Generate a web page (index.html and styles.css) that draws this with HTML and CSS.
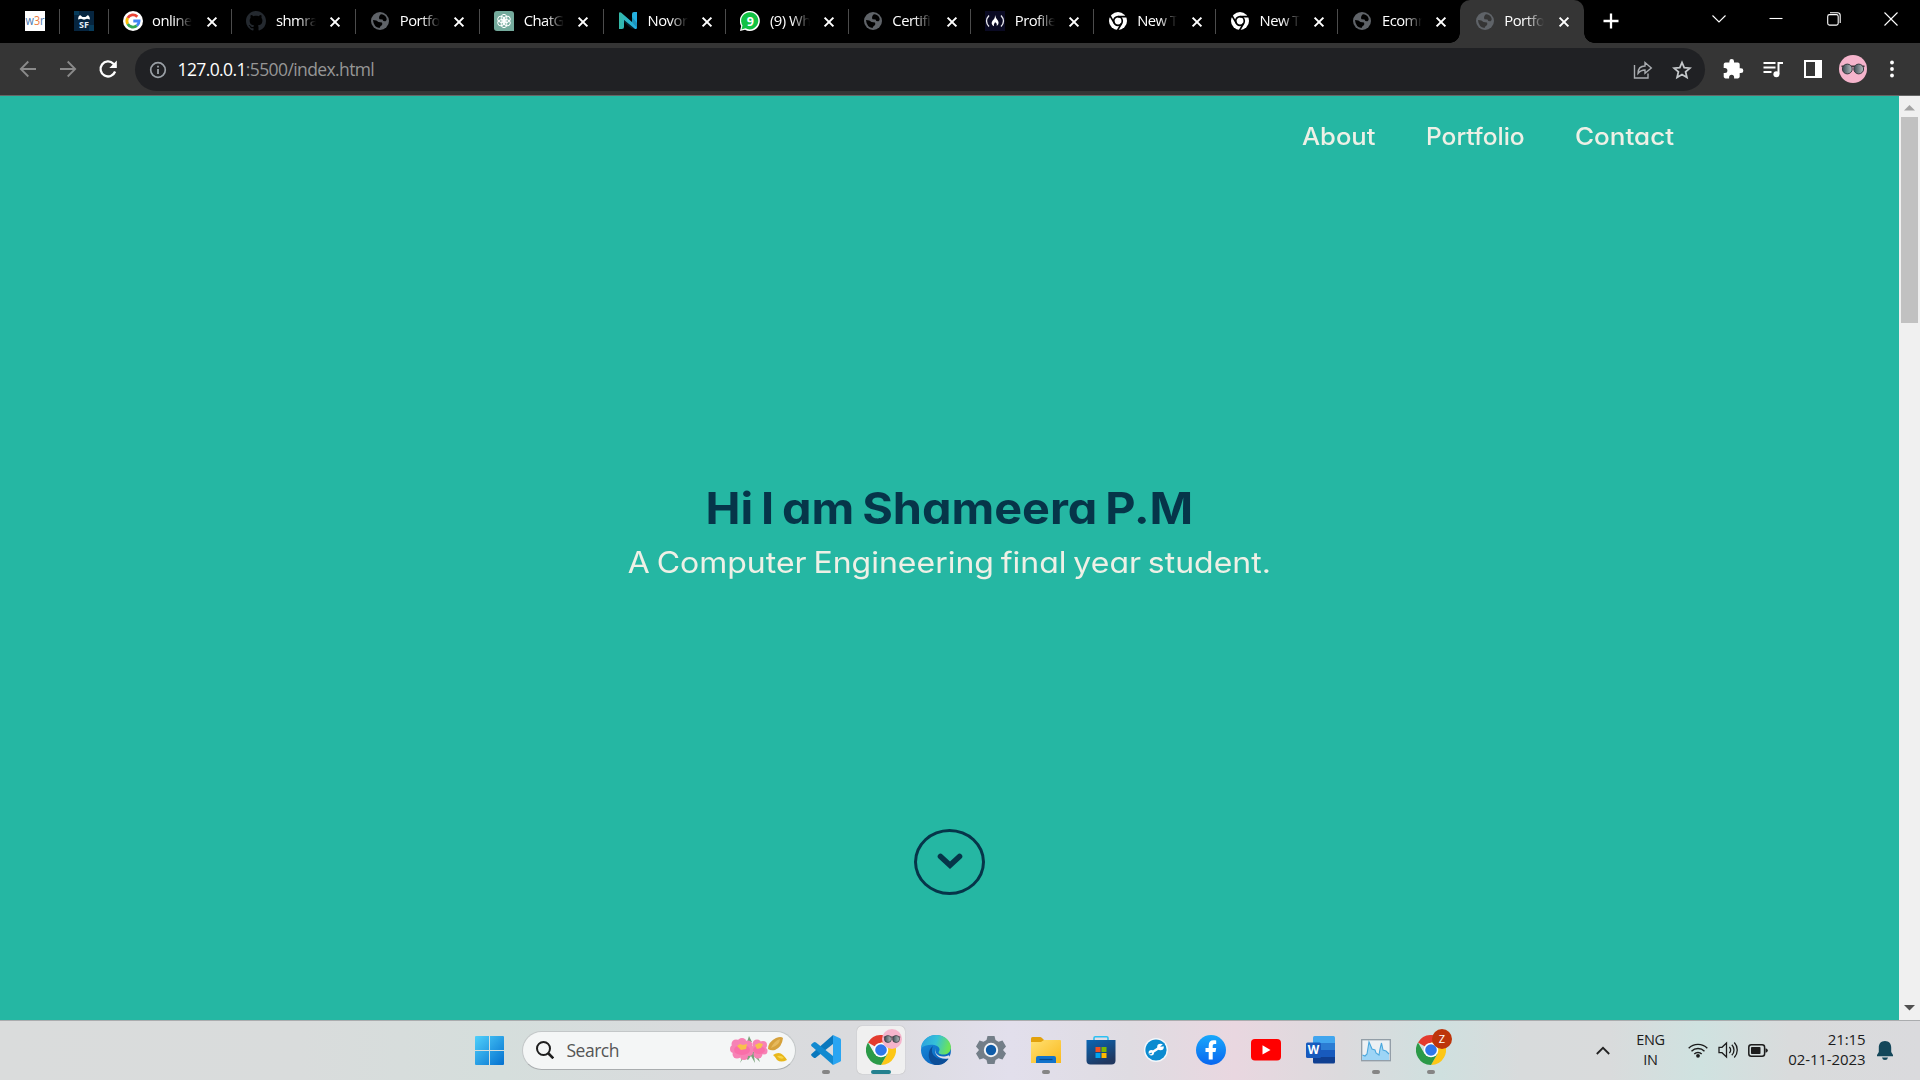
FILE: index.html
```html
<!DOCTYPE html>
<html lang="en">
<head>
<meta charset="utf-8">
<title>Portfolio</title>
<link rel="stylesheet" href="styles.css">
</head>
<body>
<svg class="defs" width="0" height="0">
  <defs>
    <linearGradient id="winG" x1="0" y1="0" x2="1" y2="1"><stop offset="0" stop-color="#4fd0fb"/><stop offset="1" stop-color="#0470cf"/></linearGradient>
    <linearGradient id="nG" x1="0" x2="1"><stop offset="0" stop-color="#35b9a5"/><stop offset="1" stop-color="#22aee8"/></linearGradient>
    <linearGradient id="edgeA" x1="0" y1="0" x2="1" y2="0.2"><stop offset="0" stop-color="#2a9de0"/><stop offset="0.55" stop-color="#35c1d8"/><stop offset="1" stop-color="#6be35a"/></linearGradient>
    <linearGradient id="edgeB" x1="0" y1="0" x2="0.6" y2="1"><stop offset="0" stop-color="#1a94e0"/><stop offset="1" stop-color="#0b62bd"/></linearGradient>
    <linearGradient id="foldG" x1="0" y1="0" x2="1" y2="1"><stop offset="0" stop-color="#ffe072"/><stop offset="1" stop-color="#fab91c"/></linearGradient>
    <linearGradient id="storeG" x1="0" y1="0" x2="0.5" y2="1"><stop offset="0" stop-color="#0a66b4"/><stop offset="1" stop-color="#20375f"/></linearGradient>
    <linearGradient id="fbG" x1="0" y1="0" x2="0" y2="1"><stop offset="0" stop-color="#19a8fb"/><stop offset="1" stop-color="#0866f0"/></linearGradient>
    <linearGradient id="lensG" x1="0" y1="0" x2="1" y2="0"><stop offset="0" stop-color="#3b4a52"/><stop offset="1" stop-color="#b5bcc0"/></linearGradient>
    <symbol id="close" viewBox="0 0 12 12"><path d="M1.600 1.600 10.400 10.400M10.400 1.600 1.600 10.400" stroke="#fff" stroke-width="2" fill="none"/></symbol>
    <symbol id="globe" viewBox="0 0 20 20"><circle cx="10" cy="10" r="9" fill="#5f6368"/><path d="M10.500 3.400Q14.500 3 16.500 7 17.300 9.800 15.500 10.300 13 10.600 12.500 8.500L9.500 8.200Q8.200 6 10.500 3.400zM3 9Q7 9 8.500 11L12 11.500Q13 14 10.500 15.300L9.500 17Q3.500 16 3 9z" fill="var(--land,#000)"/></symbol>
    <symbol id="chromeMono" viewBox="0 0 20 20"><circle cx="10" cy="10" r="9" fill="#fff"/><circle cx="10" cy="10" r="4.300" fill="none" stroke="#000" stroke-width="1.700"/><path d="M10 5.700h8.300M6.300 12.200 2.100 4.900M13.700 12.200 9.500 19.400" stroke="#000" stroke-width="1.700"/></symbol>
    <symbol id="chrome" viewBox="0 0 30 30"><path d="M15 15 2 7.500A15 15 0 0 1 28 7.500H15z" fill="#e33b2e"/><path d="M15 15 28 7.500A15 15 0 0 1 15 30l6.500-11.200z" fill="#fdc716"/><path d="M15 15 8.500 18.800 2 7.500A15 15 0 0 0 15 30l6.500-11.200z" fill="#2b9a48"/><path d="M15 7.500H28L21 15z" fill="#fdc716"/><circle cx="15" cy="15" r="7.300" fill="#fff"/><circle cx="15" cy="15" r="5.800" fill="#2f78ea"/></symbol>
    <symbol id="shades" viewBox="0 0 28 28"><circle cx="14" cy="14" r="14" fill="#f5b4cc"/><path d="M2.500 11.300h23" stroke="#42373c" stroke-width="1.600"/><circle cx="8.300" cy="14" r="4.900" fill="url(#lensG)" stroke="#3a3a40" stroke-width="1"/><circle cx="19.700" cy="14" r="4.900" fill="url(#lensG)" stroke="#3a3a40" stroke-width="1"/></symbol>
  </defs>
</svg>

<div class="screen">
  <header class="tabstrip">
    <div class="tab pinned first"><svg class="fav" viewBox="0 0 20 20"><rect width="20" height="20" fill="#fff"/><text x="0.500" y="14" font-size="12" textLength="19" lengthAdjust="spacingAndGlyphs" fill="#4a78b0">w<tspan fill="#ee7d42">3</tspan>r</text></svg></div>
    <div class="tab pinned"><svg class="fav" viewBox="0 0 20 20"><rect width="20" height="20" fill="#06253f"/><path d="M0 0h5v4H0zM15 14h5v6h-5z" fill="#073b5a"/><path d="M4 8.500Q4 5 6 4l2.500 2h3L14 4q2 1.500 2 4.500l-3-.8-3 1-3-1z" fill="#fff"/><text x="10" y="16.500" font-size="9" font-weight="700" text-anchor="middle" fill="#e2eef7">SF</text></svg></div>
    <div class="tab wide"><svg class="fav" viewBox="0 0 20 20"><circle cx="10" cy="10" r="10" fill="#fff"/><g fill="none" stroke-width="2.800"><path d="M4.700 7A6.100 6.100 0 0 1 14.300 5.700" stroke="#ea4335"/><path d="M4.700 13A6.100 6.100 0 0 1 4.700 7" stroke="#fbbc05"/><path d="M4.700 13A6.100 6.100 0 0 0 13.900 14.700" stroke="#34a853"/><path d="M13.900 14.700A6.100 6.100 0 0 0 16.100 10H10.300" stroke="#4285f4"/></g></svg><span class="label">online</span><svg class="x"><use href="#close"/></svg></div>
    <div class="tab wide"><svg class="fav" viewBox="0 0 16 16"><path fill="#24292f" d="M8 0C3.580 0 0 3.580 0 8c0 3.540 2.290 6.530 5.470 7.590.4.070.55-.17.55-.38 0-.19-.01-.82-.01-1.490-2.010.37-2.530-.49-2.690-.94-.09-.23-.48-.94-.82-1.130-.28-.15-.68-.52-.01-.53.63-.01 1.080.58 1.230.82.72 1.210 1.870.87 2.330.66.070-.52.28-.87.51-1.070-1.780-.2-3.640-.89-3.640-3.950 0-.87.31-1.590.82-2.150-.08-.2-.36-1.020.08-2.120 0 0 .67-.21 2.200.82.64-.18 1.320-.27 2-.27s1.360.09 2 .27c1.530-1.040 2.200-.82 2.200-.82.44 1.100.16 1.920.08 2.120.51.56.82 1.270.82 2.150 0 3.070-1.870 3.750-3.650 3.950.29.25.54.73.54 1.480 0 1.070-.01 1.930-.01 2.200 0 .21.15.46.55.38A8.010 8.010 0 0 0 16 8c0-4.420-3.580-8-8-8z"/></svg><span class="label">shmra</span><svg class="x"><use href="#close"/></svg></div>
    <div class="tab wide"><svg class="fav"><use href="#globe"/></svg><span class="label">Portfo</span><svg class="x"><use href="#close"/></svg></div>
    <div class="tab wide"><svg class="fav" viewBox="0 0 20 20"><path d="M3 0h14q3 0 3 3v17H3q-3 0-3-3V3q0-3 3-3z" fill="#74aa9c"/><g fill="none" stroke="#fff" stroke-width="1"><ellipse id="petal" cx="10" cy="7" rx="2.900" ry="3.700"/><use href="#petal" transform="rotate(60 10 10)"/><use href="#petal" transform="rotate(120 10 10)"/><use href="#petal" transform="rotate(180 10 10)"/><use href="#petal" transform="rotate(240 10 10)"/><use href="#petal" transform="rotate(300 10 10)"/></g></svg><span class="label">ChatG</span><svg class="x"><use href="#close"/></svg></div>
    <div class="tab"><svg class="fav" viewBox="0 0 20 20"><path d="M1 2.500Q1 .5 3 1.500L14 11V3Q14 1 16 1h3v15.500q0 2-2 1.500L6 9v7q0 2-2 2H1z" fill="url(#nG)"/><path d="M6 9l11 9q-4-.5-6-2.500L6 11zM14 11V6l5 6v5z" fill="#0b5f7c" opacity=".35"/></svg><span class="label">Novo<i>r</i></span><svg class="x"><use href="#close"/></svg></div>
    <div class="tab"><svg class="fav" viewBox="0 0 20 20"><path d="M0 20 1.200 15A10 10 0 1 1 5 18.700z" fill="#fff"/><path d="M1.500 18.500 2.500 14.500A8.600 8.600 0 1 1 5.500 17.300z" fill="#11c244"/><text x="6.700" y="14.500" font-size="12.500" font-weight="700" fill="#fff">9</text></svg><span class="label">(9) Wh</span><svg class="x"><use href="#close"/></svg></div>
    <div class="tab"><svg class="fav"><use href="#globe"/></svg><span class="label">Certifi</span><svg class="x"><use href="#close"/></svg></div>
    <div class="tab"><svg class="fav" viewBox="0 0 20 20"><rect width="20" height="20" fill="#0a0a23"/><path d="M4 4.500q-5 5.500 0 11M16 4.500q5 5.500 0 11" fill="none" stroke="#e8e8ee" stroke-width="1.300"/><path d="M10 4q.5 2.500 2.500 5c2 2.800.8 5-.8 6 .5-2-.3-3-1.700-3.700-.5 1.500-1.700 2-.9 3.900C6.200 14 6 11 8.200 9 10 7.300 10 5.500 10 4z" fill="#fff"/></svg><span class="label">Profile</span><svg class="x"><use href="#close"/></svg></div>
    <div class="tab"><svg class="fav"><use href="#chromeMono"/></svg><span class="label">New T</span><svg class="x"><use href="#close"/></svg></div>
    <div class="tab"><svg class="fav"><use href="#chromeMono"/></svg><span class="label">New T</span><svg class="x"><use href="#close"/></svg></div>
    <div class="tab last"><svg class="fav"><use href="#globe"/></svg><span class="label">Ecom<i>m</i></span><svg class="x"><use href="#close"/></svg></div>
    <div class="tab active"><svg class="fav"><use href="#globe"/></svg><span class="label">Portfo</span><svg class="x"><use href="#close"/></svg></div>
    <svg class="plus" viewBox="0 0 16 16"><path d="M8 .5v15M.5 8h15" stroke="#fff" stroke-width="2.300"/></svg>
    <div class="winctl">
      <svg viewBox="0 0 14 14"><path d="M.5 3.500 7 10l6.500-6.500"/></svg>
      <svg viewBox="0 0 14 14"><path d="M.5 6.500h13"/></svg>
      <svg viewBox="0 0 14 14"><rect x=".7" y="2.600" width="10.500" height="10.500" rx="1.800"/><path d="M3 .8h7.500a2.700 2.700 0 0 1 2.700 2.700V11"/></svg>
      <svg viewBox="0 0 14 14"><path d="M.5.5l13 13M13.500.5.5 13.500"/></svg>
    </div>
  </header>

  <div class="toolbar">
    <div class="navbtns">
      <svg viewBox="0 0 20 20"><path d="M18 10H3M10.300 2.500 2.800 10l7.500 7.500" stroke="#8a8a8a" stroke-width="1.800" fill="none"/></svg>
      <svg viewBox="0 0 20 20"><path d="M2 10h15M9.700 2.500l7.500 7.500-7.500 7.500" stroke="#8a8a8a" stroke-width="1.800" fill="none"/></svg>
      <svg viewBox="0 0 20 20"><path d="M17.100 12.500A7.500 7.500 0 1 1 15.400 4.700L17.500 7" stroke="#fff" stroke-width="2.300" fill="none"/><path d="M18.800 1.500V9h-7.500z" fill="#fff"/></svg>
    </div>
    <div class="omnibox">
      <svg class="info" viewBox="0 0 18 18"><circle cx="9" cy="9" r="7.300" fill="none" stroke="#9aa0a6" stroke-width="1.700"/><path d="M9 8v5M9 4.800v1.800" stroke="#9aa0a6" stroke-width="1.800"/></svg>
      <span class="url"><b>127.0.0.1</b>:5500/index.html</span>
      <svg class="share" viewBox="0 0 20 20"><path d="M1.500 5v13H15v-4.500M5 13.500C5 8.500 8 6 12 6V2.500L18.300 8 12 13.300V10c-3 0-5 1-7 3.500z" fill="none" stroke="#a9acb0" stroke-width="1.400"/></svg>
      <svg class="star" viewBox="0 0 20 20"><path d="M10 2.500l2.200 5.200 5.700.5-4.300 3.700 1.300 5.500L10 14.500l-4.900 2.900 1.300-5.500L2.100 8.200l5.700-.5z" fill="none" stroke="#c4c7ca" stroke-width="1.800"/></svg>
    </div>
    <div class="tools">
      <svg viewBox="0 0 22 22"><path d="M19 10.300h-1.300V6.500c0-1-.8-1.900-1.900-1.900H12V3.300a2.300 2.300 0 0 0-4.600 0v1.300H3.600c-1 0-1.900.8-1.900 1.900v3.400h1.200a2.500 2.500 0 0 1 0 5H1.700v3.600c0 1 .8 1.900 1.900 1.900h3.500v-1.200a2.500 2.500 0 0 1 5 0v1.200h3.700c1 0 1.900-.8 1.900-1.900V15H19a2.350 2.350 0 0 0 0-4.700z" fill="#fff"/></svg>
      <svg viewBox="0 0 22 22"><path d="M1.500 5h12M1.500 9.500h12M1.500 14h8" stroke="#fff" stroke-width="2"/><path d="M16.500 4v12M15.500 5H21" stroke="#fff" stroke-width="2"/><circle cx="14.400" cy="16.300" r="3" fill="#fff"/></svg>
      <svg viewBox="0 0 22 22"><rect x="3" y="3" width="16" height="16" fill="none" stroke="#fff" stroke-width="2"/><path d="M13 3h6v16h-6z" fill="#fff"/></svg>
      <svg class="avatar"><use href="#shades"/></svg>
      <svg class="dots" viewBox="0 0 22 22"><g fill="#fff"><circle cx="11" cy="4.500" r="1.900"/><circle cx="11" cy="11" r="1.900"/><circle cx="11" cy="17.500" r="1.900"/></g></svg>
    </div>
  </div>

  <div class="viewport">
    <main class="page">
      <nav class="menu"><a class="n1">About</a><a class="n2">Portfolio</a><a class="n3">Contact</a></nav>
      <section class="hero">
        <h1>Hi I am Shameera P.M</h1>
        <p>A Computer Engineering final year student.</p>
      </section>
      <div class="down"><svg viewBox="0 0 26 17"><path d="M3.500 3.500 13 12.300l9.500-8.800" stroke="#063549" stroke-width="5.600" stroke-linecap="round" stroke-linejoin="miter" fill="none"/></svg></div>
    </main>
    <aside class="scrollbar">
      <svg viewBox="0 0 11 6"><path d="M5.500 0 11 5.500H0z" fill="#a3a3a3"/></svg>
      <div class="thumb"></div>
      <svg viewBox="0 0 11 6"><path d="M0 0h11L5.500 5.500z" fill="#505050"/></svg>
    </aside>
  </div>

  <footer class="taskbar">
    <svg class="start" viewBox="0 0 29 29"><path d="M1 0h13v14H0V1q0-1 1-1zM15 0h13q1 0 1 1v13H15zM0 15h14v14H1q-1 0-1-1zM15 15h14v13q0 1-1 1H15z" fill="url(#winG)"/></svg>
    <div class="search">
      <svg class="mag" viewBox="0 0 18 18"><circle cx="7.500" cy="7.500" r="6.500" fill="none" stroke="#1e1e1e" stroke-width="2"/><path d="M12 12l5.300 5.300" stroke="#1e1e1e" stroke-width="2.600"/></svg>
      <span>Search</span>
      <svg class="flowers" viewBox="0 0 58 28">
        <path d="M10 27l4-6 4 3 3-4 4 7-1-7 6 6-4-10H14zM17 6l2-6 3 6z" fill="#7ba37c"/>
        <g fill="#f782b5"><circle cx="6" cy="8" r="4.500"/><circle cx="12" cy="6.500" r="4.500"/><circle cx="18" cy="9" r="4.500"/><circle cx="19" cy="16" r="4"/><circle cx="14" cy="20" r="4"/><circle cx="7" cy="18" r="4.500"/><circle cx="4" cy="13" r="4"/><circle cx="27" cy="8" r="4.500"/><circle cx="33" cy="9" r="4"/><circle cx="34" cy="15" r="3.500"/><circle cx="28" cy="18" r="4.500"/><circle cx="23" cy="13" r="3"/></g>
        <ellipse cx="12" cy="14" rx="8" ry="5" fill="#f96fa9"/><ellipse cx="29" cy="14" rx="6" ry="4" fill="#f96fa9"/>
        <path d="M7 10l3-2 3 1 4-1-1 5-5 1zM25 9l4-2 4 1-2 4-4 1z" fill="#f8c14c"/>
        <path d="M38 13q0-7 8-11 5-2 7 0-1 9-8 12-4 1-7-1z" fill="#d6a23c"/><path d="M41 12q3-7 9-9 0 6-9 9z" fill="#e6b95c"/>
        <path d="M43 19q6-4 10 0 3 3 4 5-6 3-10 0l-2-3z" fill="#e8b71b"/><path d="M47 20q5-1 7 2-4 2-7-2z" fill="#f7d548"/>
      </svg>
    </div>
    <div class="apps">
      <div class="app run"><svg viewBox="0 0 30 30"><path d="M22 0v9L5 22.500q-1.300 1-2.500 0L.7 21q-1.200-1.200 0-2.300z" fill="#0a78bd"/><path d="M22 30v-9L5 7.500q-1.300-1-2.500 0L.7 9q-1.200 1.200 0 2.300z" fill="#128ad0"/><path d="M22 0l7 3.200q1 .5 1 1.500v20.600q0 1-1 1.500L22 30z" fill="#2aa5f2"/></svg></div>
      <div class="app current"><svg viewBox="0 0 30 30"><use href="#chrome"/></svg><svg class="badge"><use href="#shades"/></svg></div>
      <div class="app"><svg viewBox="0 0 30 30"><circle cx="15" cy="15" r="15" fill="url(#edgeB)"/><path d="M0 13C2-4 28-4 30 12c0 6-5 9-11 7-2-.7-1.500-2-.6-3.500C20 10 8 7 0 13z" fill="url(#edgeA)"/><path d="M12 11C8 19 15 26 27.500 24A15 15 0 0 1 14 30C6 27 6 15 12 11z" fill="#0c4e98"/><path d="M14.500 12.500c-2 6 4 11.500 13.500 7.700L29.500 23 27 23.500C18 25 12 19 14.500 12.500z" fill="#e2dfe9"/></svg></div>
      <div class="app"><svg viewBox="0 0 30 30"><path d="M11.500 1h7l1 4 3 1.700 4-1.200L30 11.500 27 15l3 3.500-3.500 6-4-1.200-3 1.700-1 4h-7l-1-4-3-1.700-4 1.200-3.500-6L3 15 0 11.500l3.500-6 4 1.200 3-1.700z" fill="#737e88"/><circle cx="15" cy="15" r="7.200" fill="#f2f3f5"/><circle cx="15" cy="15" r="5.200" fill="#0f5ca8"/></svg></div>
      <div class="app run"><svg viewBox="0 0 30 30"><path d="M0 3.500Q0 2 1.500 2H9q1 0 2 1l2 2v4H0z" fill="#e2a10c"/><path d="M0 7h10l3-2h16q1 0 1 1v22H0z" fill="url(#foldG)"/><path d="M5 28v-5q0-2 2-2h16q2 0 2 2v5z" fill="#1273cb"/><path d="M8.500 24.500h13" stroke="#084a8b" stroke-width="1.200"/></svg></div>
      <div class="app"><svg viewBox="0 0 30 30"><path d="M8 6V3q0-1.300 1.300-1.300h11.400Q22 1.700 22 3v3" fill="none" stroke="#2cc0f2" stroke-width="1.600"/><path d="M.5 5h29v20.500q0 4-4 4h-21q-4 0-4-4z" fill="url(#storeG)"/><path d="M9.500 12h5v5h-5z" fill="#f25022"/><path d="M15.500 12h5v5h-5z" fill="#7fba00"/><path d="M9.500 18h5v5h-5z" fill="#00a4ef"/><path d="M15.500 18h5v5h-5z" fill="#ffb900"/></svg></div>
      <div class="app"><svg viewBox="0 0 30 30"><circle cx="15" cy="15" r="12" fill="#f5f8fb"/><circle cx="15" cy="15" r="10.600" fill="#0b8bd0"/><path d="M9.500 18.500 20 11.500" stroke="#fff" stroke-width="2.400"/><circle cx="19.500" cy="12" r="3.300" fill="#fff"/><circle cx="10.300" cy="17.800" r="2.700" fill="#fff"/><path d="M19 11.800l4.500-4v3.500zM5.500 20l5-2.600.5 1.600z" fill="#0b8bd0"/></svg></div>
      <div class="app"><svg viewBox="0 0 30 30"><circle cx="15" cy="15" r="15" fill="url(#fbG)"/><path d="M12.700 24.500V17H9.500v-4h3.200v-2.300c0-3.700 1.700-5.400 5-5.400.9 0 1.800.1 2.500.3v3.300h-1.600c-1.500 0-1.900.7-1.900 2V13h3.500l-.7 4h-2.800v7.500z" fill="#fff"/></svg></div>
      <div class="app"><svg viewBox="0 0 30 30"><rect y="4" width="30" height="21.500" rx="4" fill="#f00"/><path d="M11.500 10.300v9.200l8-4.600z" fill="#fff"/></svg></div>
      <div class="app"><svg viewBox="0 0 30 30"><path d="M7 2.500Q7 1 8.500 1h19Q29 1 29 2.500V8H7z" fill="#41a5ee"/><path d="M7 8h22v7H7z" fill="#2b7cd3"/><path d="M7 15h22v7H7z" fill="#185abd"/><path d="M7 22h22v5q0 1.500-1.500 1.500h-19Q7 28.500 7 27z" fill="#103f91"/><rect y="7.500" width="15" height="15.500" rx="1.500" fill="#185abd"/><text x="1.800" y="19.300" font-size="11.500" font-weight="700" textLength="11.500" lengthAdjust="spacingAndGlyphs" fill="#fff">W</text></svg></div>
      <div class="app run"><svg viewBox="0 0 30 30"><rect x=".7" y="4.700" width="28.600" height="21" fill="#edf1f4" stroke="#8f9ba5" stroke-width="1.300"/><path d="M1.500 20l2.500 1 2-2 2-12 3 7 3 1 1 3 3 2 1-6 1.500-6 1.500 7 3 1 3 3v6h-27z" fill="#9dd5f6"/><path d="M1.500 20l2.500 1 2-2 2-12 3 7 3 1 1 3 3 2 1-6 1.500-6 1.500 7 3 1 3 3" fill="none" stroke="#4ca8de" stroke-width="1.100"/></svg></div>
      <div class="app run"><svg viewBox="0 0 30 30"><use href="#chrome"/></svg><svg class="badge" viewBox="0 0 20 20"><circle cx="10" cy="10" r="10" fill="#bd350b"/><text x="6.700" y="14" font-size="11" fill="#fff">Z</text></svg></div>
    </div>
    <div class="tray">
      <svg class="up" viewBox="0 0 14 9"><path d="M.8 8 7 1.800 13.200 8" fill="none" stroke="#222" stroke-width="1.800"/></svg>
      <div class="lang"><span>ENG</span><span>IN</span></div>
      <svg class="wifi" viewBox="0 0 20 16"><g fill="none" stroke="#1c1c1c" stroke-width="1.400"><path d="M.7 6.300a13 13 0 0 1 18.600 0M3.500 9.200a9.200 9.200 0 0 1 13 0M6.300 12a5.200 5.200 0 0 1 7.400 0"/></g><circle cx="10" cy="13.800" r="1.900" fill="#1c1c1c"/></svg>
      <svg class="vol" viewBox="0 0 21 18"><g fill="none" stroke="#1c1c1c" stroke-width="1.300"><path d="M1 6.300h3L8.500 2v14L4 11.700H1z"/><path d="M11.300 6a4 4 0 0 1 0 6M13.800 3.700a7.500 7.500 0 0 1 0 10.600M16.300 1.500a11 11 0 0 1 0 15"/></g></svg>
      <svg class="bat" viewBox="0 0 20 13"><rect x=".8" y=".8" width="15.800" height="11.400" rx="2.500" fill="none" stroke="#1c1c1c" stroke-width="1.500"/><rect x="3" y="3" width="9.500" height="7" rx=".8" fill="#1c1c1c"/><path d="M17.500 4.200q2.300.3 2.300 2.300t-2.300 2.300z" fill="#1c1c1c"/></svg>
      <div class="clock"><span>21:15</span><span class="date">02-11-2023</span></div>
      <svg class="bell" viewBox="0 0 16 19"><path d="M8 0c4 0 6.200 2.800 6.200 6.500V11L16 14v1.300H0V14l1.800-3V6.500C1.800 2.800 4 0 8 0zM5 16.500h6q-.5 2.500-3 2.500t-3-2.500z" fill="#14475a"/></svg>
    </div>
  </footer>
</div>
</body>
</html>
```
FILE: styles.css
```css
* { box-sizing: border-box; }
body { margin: 0; background: #000; font-family: "Open Sans", "Noto Sans", sans-serif; }
svg { display: block; flex: none; }
.defs { position: absolute; }
.screen { width: 1920px; height: 1080px; display: flex; flex-direction: column; overflow: hidden; }

/* tab strip */
.tabstrip { height: 43px; flex: none; background: #000; display: flex; }
.tab { width: 122.400px; flex: none; height: 43px; display: flex; align-items: center; padding-left: 14px; position: relative; }
.tab::after { content: ""; position: absolute; right: 0; top: 9px; width: 1px; height: 25px; background: #4c4c4c; }
.tab.wide { width: 123.900px; }
.tab.pinned { width: 49px; }
.tab.first { width: 59.500px; padding-left: 25px; }
.tab.last::after { display: none; }
.fav { width: 20px; height: 20px; margin-top: -1px; }
.label { width: 43px; margin-left: 9.500px; font-size: 14.800px; line-height: 20px; letter-spacing: -0.5px; color: #fff; white-space: nowrap; margin-top: -4px; -webkit-mask-image: linear-gradient(90deg, #000 22px, transparent 40px); mask-image: linear-gradient(90deg, #000 22px, transparent 40px); }
.label i { font-style: normal; }
.x { width: 12px; height: 12px; margin-left: 10.500px; }
.tab.active { background: #353535; border-radius: 10px 10px 0 0; width: 124px; padding-left: 15px; --land: #353535; margin-left: -1px; }
.tab.active::after, .tab.active::before { content: ""; position: absolute; display: block; width: 10px; height: 10px; top: auto; bottom: 0; background: none; }
.tab.active::after { right: -10px; background: radial-gradient(circle at 100% 0, transparent 9.500px, #353535 10px); }
.tab.active::before { left: -10px; background: radial-gradient(circle at 0 0, transparent 9.500px, #353535 10px); }
.plus { width: 16px; height: 16px; margin: 13px 0 0 19px; }
.winctl { display: flex; gap: 43.300px; margin: 12px 0 0 auto; padding-right: 22px; }
.winctl svg { width: 14px; height: 14px; fill: none; stroke: #fff; stroke-width: 1.100; }

/* address bar */
.toolbar { height: 53px; flex: none; background: #353535; border-bottom: 1px solid #666; display: flex; align-items: center; padding-left: 17.500px; }
.navbtns { display: flex; gap: 20px; width: 117.500px; flex: none; }
.navbtns svg { width: 20px; height: 20px; margin-top: -1px; }
.omnibox { width: 1570px; flex: none; height: 43px; margin-top: 1px; border-radius: 22px; background: #202124; display: flex; align-items: center; padding: 0 13px 0 13.500px; }
.info { width: 18px; height: 18px; }
.url { margin-left: 11px; font-size: 17.500px; line-height: 24px; letter-spacing: -0.61px; color: #969696; flex: 1; margin-top: -2px; }
.url b { font-weight: 400; color: #fff; }
.share { width: 20px; height: 20px; margin-right: 19px; }
.star { width: 20px; height: 20px; }
.tools { display: flex; align-items: center; margin-left: 17px; }
.tools svg { width: 22px; height: 22px; margin-right: 18px; }
.tools svg.avatar { width: 28px; height: 28px; margin: 0 14px 0 -3px; }
.tools svg.dots { margin-right: 0; }

/* web page */
.viewport { height: 924px; flex: none; display: flex; }
.page { width: 1899px; background: #25b7a3; font-family: Inter, "Open Sans", sans-serif; font-feature-settings: "cv11" 1; display: flex; flex-direction: column; align-items: center; }
.menu { display: flex; width: 100%; height: 82px; padding-left: 1302px; align-items: center; font-size: 24px; font-weight: 450; line-height: 30px; color: #eef0e6; white-space: nowrap; }
.menu a { transform-origin: 0 50%; }
.menu .n1 { width: 124px; transform: scaleX(1.065); }
.menu .n2 { width: 149px; transform: scaleX(1.022); }
.menu .n3 { transform: scaleX(1.085); }
/* hero lines are set a little extended */
.hero { height: 240px; margin-top: 302px; text-align: center; white-space: nowrap; }
.hero h1 { margin: 0; font-size: 43.500px; line-height: 56px; font-weight: 700; word-spacing: -3px; color: #063549; transform: scaleX(1.076); }
.hero p { margin: 0; font-size: 29.200px; line-height: 54px; word-spacing: -2px; color: #eef0e6; transform: scaleX(1.096); }
.down { width: 71px; height: 66px; margin: 109px 0 0 0; border: 3px solid #063549; border-radius: 50%; display: flex; justify-content: center; padding-top: 21px; }
.down svg { width: 26px; height: 17px; }
.scrollbar { width: 21px; background: #f0f0f0; display: flex; flex-direction: column; align-items: center; padding: 9px 0; }
.scrollbar svg { width: 11px; height: 6px; }
.thumb { width: 17px; height: 206px; margin: 6px 0 auto; background: #c1c1c1; }

/* taskbar */
.taskbar { height: 60px; flex: none; border-top: 1px solid #aaacae; display: flex; align-items: center; padding: 0 0 1px 475px;
  background: linear-gradient(90deg, #dadcdc 0, #d9dcdc 300px, #d5dedc 500px, #d9dbdd 700px, #dadbde 860px, #e2dfec 1010px, #dfdce2 1130px, #e9d7e0 1235px, #dcdadd 1340px, #cfe0df 1440px, #d8dbdc 1520px, #d9dbdc 1610px, #cfe2e0 1700px, #d9dbdc 1790px, #dadadd 1920px); }
.start { width: 29px; height: 29px; }
.search { width: 274px; height: 39px; margin-left: 18px; border-radius: 20px; background: #f4f6f6; border: 1px solid #c3c7c8; border-bottom-color: #a9adaf; display: flex; align-items: center; padding-left: 13px; }
.mag { width: 18px; height: 18px; }
.search span { margin-left: 12.500px; width: 163.500px; font-size: 17.500px; line-height: 24px; letter-spacing: -0.5px; color: #555; }
.flowers { width: 58px; height: 28px; }
.apps { display: flex; margin-left: 2.500px; }
.app { width: 48px; height: 48px; margin: 0 3.500px; border-radius: 5px; display: flex; justify-content: center; align-items: center; position: relative; }
.app svg { width: 30px; height: 30px; }
.app.current { background: #f0f0f0; box-shadow: 0 0 1px #999; }
.app svg.badge { position: absolute; width: 20px; height: 20px; left: 25px; top: 3px; }
.run::after, .current::after { content: ""; position: absolute; bottom: 0; left: 20px; width: 8px; height: 4px; border-radius: 2px; background: #858585; }
.current::after { left: 14px; width: 20px; background: #24818f; }
.tray { display: flex; align-items: center; margin-left: 137px; color: #1c1c1c; font-size: 14.500px; line-height: 20px; letter-spacing: -0.3px; }
.up { width: 14px; height: 9px; }
.lang { width: 40px; margin-left: 21px; display: flex; flex-direction: column; align-items: center; }
.wifi { width: 20px; height: 16px; margin-left: 17px; }
.vol { width: 21px; height: 18px; margin-left: 10px; }
.bat { width: 20px; height: 13px; margin-left: 9px; }
.clock { width: 98px; display: flex; flex-direction: column; align-items: flex-end; font-size: 15px; letter-spacing: -0.1px; margin-top: -2px; }
.bell { width: 16px; height: 19px; margin-left: 11px; }
```
